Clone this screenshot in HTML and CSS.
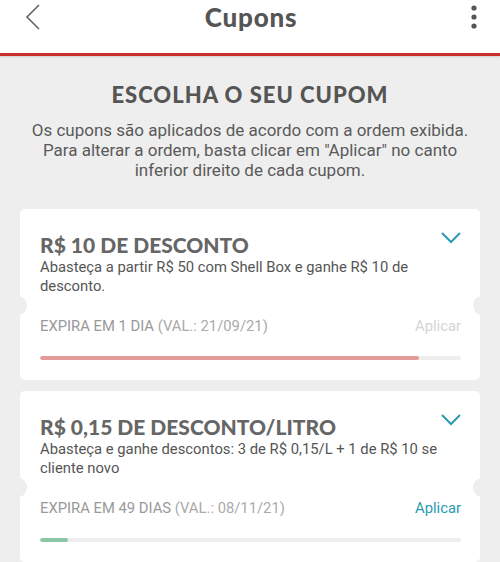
FILE: index.html
```html
<!DOCTYPE html>
<html lang="pt-BR">
<head>
  <meta charset="UTF-8">
  <meta name="viewport" content="width=device-width, initial-scale=1.0">
  <title>Cupons</title>
  <link rel="stylesheet" href="styles.css">
</head>
<body>
  <header class="topbar">
    <button class="icon-btn back" aria-label="Voltar">
      <svg width="18" height="26" viewBox="0 0 18 26"><path d="M15 1 L3 13 L15 25" fill="none" stroke="#666" stroke-width="1.6"/></svg>
    </button>
    <h1 class="topbar-title">Cupons</h1>
    <button class="icon-btn more" aria-label="Mais">
      <svg width="8" height="26" viewBox="0 0 8 26"><circle cx="4" cy="4" r="2.6" fill="#555"/><circle cx="4" cy="13" r="2.6" fill="#555"/><circle cx="4" cy="22" r="2.6" fill="#555"/></svg>
    </button>
  </header>

  <main class="content">
    <h2 class="section-title">ESCOLHA O SEU CUPOM</h2>
    <p class="section-text">Os cupons são aplicados de acordo com a ordem exibida. Para alterar a ordem, basta clicar em "Aplicar" no canto inferior direito de cada cupom.</p>

    <div class="coupon">
      <div class="coupon-head">
        <h3 class="coupon-title">R$ 10 DE DESCONTO</h3>
        <svg class="chevron" width="20" height="12" viewBox="0 0 20 12"><path d="M1 1 L10 10 L19 1" fill="none" stroke="#2a9bb0" stroke-width="2"/></svg>
      </div>
      <p class="coupon-desc">Abasteça a partir R$ 50 com Shell Box e ganhe R$ 10 de desconto.</p>
      <div class="coupon-meta">
        <span class="expire">EXPIRA EM 1 DIA <span class="val">(VAL.: 21/09/21)</span></span>
        <span class="apply disabled">Aplicar</span>
      </div>
      <div class="progress"><div class="progress-fill red" style="width: 90%"></div></div>
    </div>

    <div class="coupon">
      <div class="coupon-head">
        <h3 class="coupon-title">R$ 0,15 DE DESCONTO/LITRO</h3>
        <svg class="chevron" width="20" height="12" viewBox="0 0 20 12"><path d="M1 1 L10 10 L19 1" fill="none" stroke="#2a9bb0" stroke-width="2"/></svg>
      </div>
      <p class="coupon-desc">Abasteça e ganhe descontos: 3 de R$ 0,15/L + 1 de R$ 10 se cliente novo</p>
      <div class="coupon-meta">
        <span class="expire">EXPIRA EM 49 DIAS <span class="val">(VAL.: 08/11/21)</span></span>
        <span class="apply">Aplicar</span>
      </div>
      <div class="progress"><div class="progress-fill green" style="width: 6.7%"></div></div>
    </div>
  </main>
</body>
</html>
```

FILE: styles.css
```css
body {
    margin: 0;
    padding: 0;
    background-color: #eeeeee;
    font-family: Roboto, "Noto Sans", sans-serif;
    color: #555555;
    overflow: hidden;
}

.topbar {
    display: grid;
    grid-template-columns: 1fr auto 1fr;
    align-items: center;
    box-sizing: border-box;
    height: 56px;
    padding: 0 22px 19px 24px;
    background-color: #ffffff;
    border-bottom: 3px solid #c9302c;
    box-shadow: 0 1px 2px rgba(0, 0, 0, 0.12);
}

.icon-btn {
    background: none;
    border: none;
    padding: 0;
    display: flex;
}

.back {
    justify-self: start;
}

.more {
    justify-self: end;
}

.topbar-title {
    margin: 0;
    font-family: Lato, sans-serif;
    font-weight: 900;
    font-size: 26px;
    letter-spacing: 0.8px;
    color: #555555;
}

.content {
    padding: 0 20px;
}

.section-title {
    margin: 25px 0 0;
    text-align: center;
    font-family: Lato, sans-serif;
    font-weight: 900;
    font-size: 22px;
    letter-spacing: 1px;
    color: #555555;
}

.section-text {
    margin: 12px 0 0;
    text-align: center;
    font-size: 17px;
    line-height: 20px;
    color: #5a5a5a;
}

.coupon {
    position: relative;
    margin-top: 29px;
    padding: 23px 19px 20px 20px;
    background-color: #ffffff;
    border-radius: 5px;
}

.coupon + .coupon {
    margin-top: 11px;
}

.coupon::before, .coupon::after {
    content: "";
    position: absolute;
    top: 87px;
    width: 18px;
    height: 19px;
    border-radius: 50%;
    background-color: #eeeeee;
}

.coupon::before {
    left: -11px;
}

.coupon::after {
    right: -11px;
}

.coupon-head {
    display: flex;
    justify-content: space-between;
    align-items: flex-start;
}

.coupon-title {
    margin: 0;
    font-family: Lato, sans-serif;
    font-weight: 900;
    font-size: 21px;
    line-height: 26px;
    color: #666666;
}

.chevron {
    flex-shrink: 0;
}

.coupon-desc {
    margin: 0;
    font-size: 14.8px;
    line-height: 19px;
    color: #555555;
}

.coupon-meta {
    display: flex;
    justify-content: space-between;
    margin-top: 21px;
    font-size: 14.8px;
    line-height: 18px;
    color: #999999;
}

.val {
    color: #aaaaaa;
}

.apply {
    color: #2a9bb0;
}

.apply.disabled {
    color: #d4d4d4;
}

.progress {
    margin-top: 21px;
    height: 4px;
    border-radius: 2px;
    background-color: #eeeeee;
    overflow: hidden;
}

.progress-fill {
    height: 100%;
    border-radius: 2px;
}

.progress-fill.red {
    background-color: #e59a9a;
}

.progress-fill.green {
    background-color: #8cc6a6;
}
```
